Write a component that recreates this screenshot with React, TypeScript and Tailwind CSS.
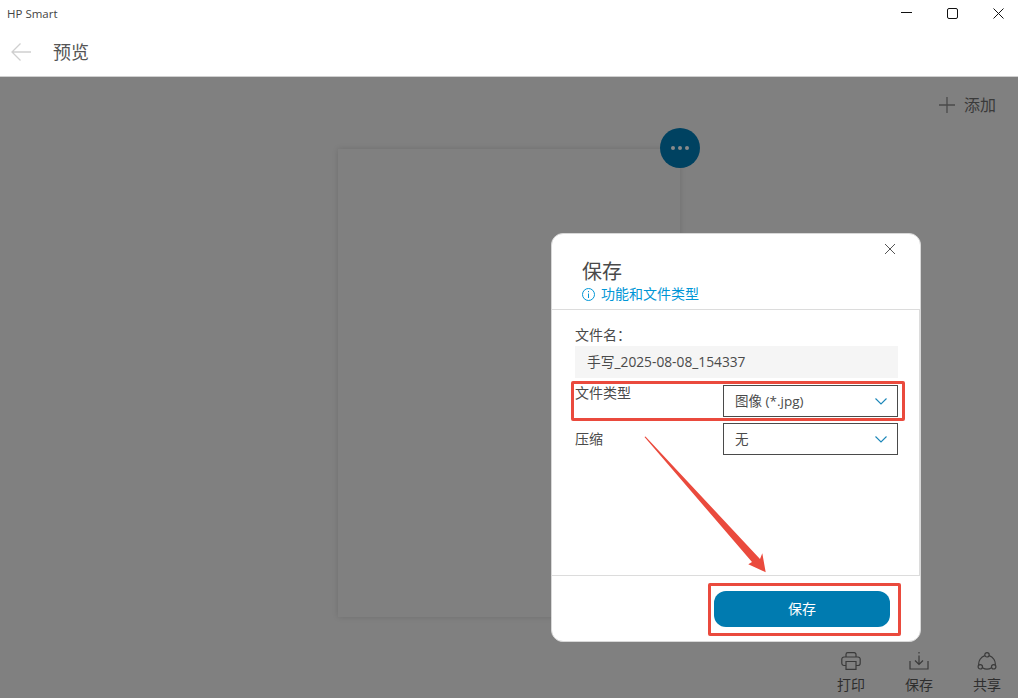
import React from 'react'

const font = "font-['Open_Sans','Noto_Sans_CJK_SC',sans-serif]"

const Chevron: React.FC = () => (
    <svg width="12" height="7" viewBox="0 0 12 7" fill="none" stroke="#1a86b8" strokeWidth="1.1">
        <path d="M.5.5L6 6 11.500.5" />
    </svg>
)

const Select: React.FC<{ value: string }> = ({ value }) => (
    <div className="flex h-8 w-[175px] items-center justify-between border border-[#4a4a4a] pl-[11px] pr-[10px] text-[13.500px] text-[#4a4a4a]">
        <span>{value}</span>
        <Chevron />
    </div>
)

const ToolButton: React.FC<{ label: string; children: React.ReactNode }> = ({ label, children }) => (
    <div className="flex w-[68px] flex-col items-center gap-[6px] text-[14px] leading-[18px] text-[#2e2e2e]">
        {children}
        <span>{label}</span>
    </div>
)

export default function App() {
    return (
        <div className={`relative flex h-[698px] w-[1018px] flex-col overflow-hidden bg-white ${font}`}>
            {/* title bar */}
            <div className="flex h-[28px] items-start justify-between">
                <span className="pl-[7px] pt-[5px] text-[11.500px] leading-[18px] text-[#444]">HP Smart</span>
                <div className="flex items-center gap-[35px] pr-[14px] pt-[8px]">
                    <svg width="11" height="11" viewBox="0 0 11 11" stroke="#111" strokeWidth="1"><path d="M0 4.500h11" /></svg>
                    <svg width="11" height="11" viewBox="0 0 11 11" fill="none" stroke="#111" strokeWidth="1"><rect x=".5" y=".5" width="10" height="10" rx="1.500" /></svg>
                    <svg width="11" height="11" viewBox="0 0 11 11" fill="none" stroke="#111" strokeWidth="1"><path d="M.5.5l10 10M10.500.5l-10 10" /></svg>
                </div>
            </div>

            {/* header */}
            <div className="flex h-[49px] items-center border-b border-b-[#d0d0d0]">
                <svg className="ml-[11px]" width="20" height="18" viewBox="0 0 20 18" fill="none" stroke="#cfcfcf" strokeWidth="1.300">
                    <path d="M20 9H1M9.500.5L1 9l8.500 8.500" />
                </svg>
                <span className="ml-[22px] text-[18px] text-[#555]">预览</span>
            </div>

            {/* page area, dimmed */}
            <div className="flex flex-1 flex-col bg-[#808080]">
                <div className="flex h-[72px] items-start justify-end pr-[22px] pt-[17px]">
                    <div className="flex items-center gap-[9px] text-[16px] leading-[22px] text-[#3a3a3a]">
                        <svg width="16" height="16" viewBox="0 0 16 16" stroke="#4a4a4a" strokeWidth="1.300"><path d="M0 8h16M8 0v16" /></svg>
                        <span>添加</span>
                    </div>
                </div>
                <div className="relative mx-auto h-[468px] w-[342px] bg-[#808080] shadow-[0_0_6px_rgba(0,0,0,0.14)]">
                    <div className="absolute -top-[21px] left-[322px] flex h-10 w-10 items-center justify-center gap-[3px] rounded-full bg-[#004261]">
                        <span className="h-[4px] w-[4px] rounded-full bg-[#8a8a8a]" />
                        <span className="h-[4px] w-[4px] rounded-full bg-[#8a8a8a]" />
                        <span className="h-[4px] w-[4px] rounded-full bg-[#8a8a8a]" />
                    </div>
                </div>
                <div className="-mr-[3px] mt-[35px] flex justify-end">
                    <ToolButton label="打印">
                        <svg width="20" height="18" viewBox="0 0 20 18" fill="none" stroke="#3a3a3a" strokeWidth="1.200">
                            <path d="M5 5V2.500A1.800 1.800 0 016.800.7h6.400A1.800 1.800 0 0115 2.500V5" />
                            <path d="M5 13.500H3a2.200 2.200 0 01-2.200-2.200V7.200A2.200 2.200 0 013 5h14a2.200 2.200 0 012.200 2.200v4.100a2.200 2.200 0 01-2.200 2.200h-2" />
                            <path d="M5 9.500h10v7.800H5z" />
                        </svg>
                    </ToolButton>
                    <ToolButton label="保存">
                        <svg width="20" height="18" viewBox="0 0 20 18" fill="none" stroke="#3a3a3a" strokeWidth="1.200">
                            <path d="M10 0v1.500M10 3.500v8.500M6 8.500l4 4 4-4" />
                            <path d="M1 9v8h18V9" />
                        </svg>
                    </ToolButton>
                    <ToolButton label="共享">
                        <svg width="20" height="18" viewBox="0 0 20 18" fill="none" stroke="#3a3a3a" strokeWidth="1.200">
                            <circle cx="10" cy="2.800" r="2.200" />
                            <circle cx="3.300" cy="14.800" r="2.200" />
                            <circle cx="16.700" cy="14.800" r="2.200" />
                            <path d="M7.900 3.700A8.500 8.500 0 001.800 13M12.100 3.700A8.500 8.500 0 0118.200 13M5.500 15.800A8.500 8.500 0 0014.500 15.800" />
                        </svg>
                    </ToolButton>
                </div>
            </div>

            {/* save dialog */}
            <div className="absolute left-[551px] top-[233px] flex h-[409px] w-[370px] flex-col rounded-xl border border-[#d8d8d8] bg-white">
                <div className="relative h-[76px] shrink-0 border-b border-b-[#dcdcdc] pl-[30px] pt-[25px]">
                    <svg className="absolute right-[25px] top-[10px]" width="10" height="10" viewBox="0 0 10 10" fill="none" stroke="#555" strokeWidth="1"><path d="M0 0l10 10M10 0L0 10" /></svg>
                    <div className="text-[20px] leading-[26px] text-[#4a4a4a]">保存</div>
                    <div className="flex items-center gap-[6px] text-[14px] leading-[18px] text-[#0096d6]">
                        <svg width="13" height="13" viewBox="0 0 13 13" fill="none" stroke="#0096d6" strokeWidth="1"><circle cx="6.500" cy="6.500" r="6" /><path d="M6.500 5.500V10M6.500 3v1.200" /></svg>
                        <span>功能和文件类型</span>
                    </div>
                </div>
                <div className="flex-1 border-r border-r-[#dcdcdc] pl-[23px] pr-[21px] pt-[15px] text-[14px] text-[#4a4a4a]">
                    <div className="leading-[20px]">文件名：</div>
                    <div className="mt-[1px] flex h-8 items-center bg-[#f5f5f5] pl-[12px] text-[13.750px]">手写_2025-08-08_154337</div>
                    <div className="mt-[7px] flex items-start justify-between">
                        <span className="leading-[16px]">文件类型</span>
                        <Select value="图像 (*.jpg)" />
                    </div>
                    <div className="mt-[6px] flex items-start justify-between">
                        <span className="pt-[6px] leading-[20px]">压缩</span>
                        <Select value="无" />
                    </div>
                </div>
                <div className="flex h-[66px] shrink-0 justify-end border-t border-t-[#dcdcdc] pr-[30px] pt-[15px]">
                    <button className="h-[36px] w-[176px] rounded-xl bg-[#007bb0] pb-[2px] text-[14px] text-white">保存</button>
                </div>
            </div>

            {/* annotations */}
            <div className="absolute left-[571px] top-[381px] h-[40px] w-[334px] rounded-[2px] border-[3px] border-[#ea4a3d]" />
            <div className="absolute left-[708px] top-[583px] h-[53px] w-[193px] rounded-[2px] border-[3px] border-[#ea4a3d]" />
            <svg className="absolute left-[640px] top-[430px]" width="135" height="150" viewBox="640 430 135 150" fill="#ea4a3d">
                <polygon points="644.500,437 645.500,436.500 760,559 762.300,553.300 765.700,572.300 748.300,564.300 752,562" />
            </svg>
        </div>
    )
}
